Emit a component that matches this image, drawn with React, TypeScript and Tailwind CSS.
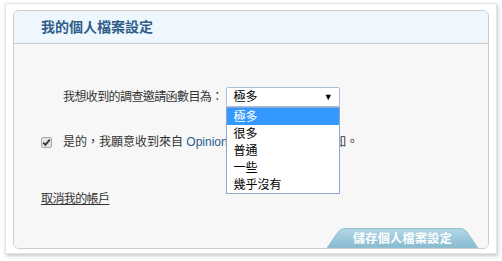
import { useState } from "react";

const FONT = "font-['Liberation_Sans','Noto_Sans_CJK_TC',sans-serif]";

const OPTIONS = ["極多", "很多", "普通", "一些", "幾乎沒有"];

function SaveTab() {
  return (
    <div className="relative w-[151px] h-[20px] flex items-center justify-center">
      <svg className="absolute inset-0" width="151" height="20" viewBox="0 0 151 20">
        <defs>
          <linearGradient id="tabfill" x1="0" y1="0" x2="0" y2="1">
            <stop offset="0" stopColor="#b4d8e7" />
            <stop offset="1" stopColor="#86bad0" />
          </linearGradient>
        </defs>
        <path
          d="M0 20 L11 4 Q13.5 0.5 18 0.5 L133 0.5 Q137.5 0.5 140 4 L151 20 Z"
          fill="url(#tabfill)"
          stroke="#97c0d2"
          strokeWidth="1"
        />
      </svg>
      <span className="relative text-[12px] font-bold text-white tracking-[0.4px] pt-[1px]">
        儲存個人檔案設定
      </span>
    </div>
  );
}

function FakeSelect() {
  const [value] = useState(OPTIONS[0]);
  return (
    <div className="relative w-[114px] h-[20px]">
      <div className="h-full bg-white border border-[#a9bfd9] rounded-t-[2px] flex items-center justify-between pl-[7px] pr-[6px] text-[12px] text-black">
        <span>{value}</span>
        <span className="text-[9px] leading-none">▼</span>
      </div>
      <ul className="absolute left-0 top-[20px] w-[114px] bg-white border border-[#8ea7cf] z-10">
        {OPTIONS.map((o, i) => (
          <li
            key={o}
            className={
              "h-[17px] flex items-center pl-[7px] text-[12px] " +
              (i === 0 ? "bg-[#3399ff] text-white" : "text-black")
            }
          >
            {o}
          </li>
        ))}
      </ul>
    </div>
  );
}

export default function App() {
  return (
    <div className={`w-[502px] h-[261px] bg-white pt-[3px] pl-[5px] ${FONT}`}>
      <div className="w-[492px] h-[251px] bg-white border border-[#e4e4e4] shadow-[1px_2px_4px_rgba(0,0,0,0.22)] pt-[6px] pl-[7px] pr-[7px] pb-[4px] flex flex-col">
        <div className="flex-1 flex flex-col rounded-[6px] border border-[#cdcdcd]">
          <div className="h-[33px] shrink-0 bg-[#eef7fe] border-b border-[#c9c9c9] rounded-t-[6px] pl-[27px] flex items-center">
            <h1 className="text-[14px] font-bold text-[#2e5e8a]">我的個人檔案設定</h1>
          </div>

          <div className="flex-1 bg-[#f7f7f7] rounded-b-[6px] flex flex-col">
            <div className="mt-[43px] pl-[49px] flex items-center h-[20px]">
              <span className="text-[12px] text-[#333] tracking-[-0.6px] mr-[3px]">我想收到的調查邀請函數目為：</span>
              <FakeSelect />
            </div>

            <div className="mt-[27px] pl-[27px] flex items-center h-[16px]">
              <span className="w-[11px] h-[11px] rounded-[2px] border border-[#a8a8a8] bg-[#e4e4e4] flex items-center justify-center">
                <svg width="9" height="9" viewBox="0 0 9 9">
                  <path d="M1.2 4.6 L3.4 6.9 L7.8 1.6" fill="none" stroke="#333" strokeWidth="1.8" />
                </svg>
              </span>
              <span className="ml-[11px] text-[12px] text-[#333] whitespace-nowrap">
                是的，我願意收到來自 <span className="text-[#2c5d8c]">OpinionWorld</span> 的電子郵件通知。
              </span>
            </div>

            <div className="mt-[41px] pl-[27px] h-[16px] flex items-center">
              <a href="#" className="text-[12px] text-[#333] tracking-[-0.6px] underline">取消我的帳戶</a>
            </div>

            <div className="mt-auto flex justify-end pr-[10px]">
              <SaveTab />
            </div>
          </div>
        </div>
      </div>
    </div>
  );
}
